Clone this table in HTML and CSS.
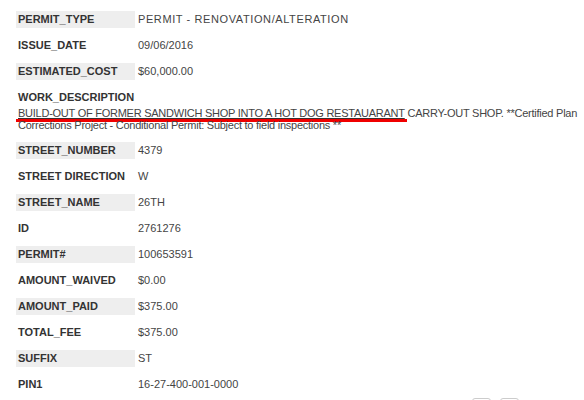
FILE: index.html
```html
<!DOCTYPE html>
<html>
<head>
<meta charset="utf-8">
<link rel="stylesheet" href="styles.css">
</head>
<body>
<div class="record">
  <div class="row alt"><div class="k">PERMIT_TYPE</div><div class="v wide">PERMIT - RENOVATION/ALTERATION</div></div>
  <div class="row"><div class="k">ISSUE_DATE</div><div class="v">09/06/2016</div></div>
  <div class="row alt"><div class="k">ESTIMATED_COST</div><div class="v">$60,000.00</div></div>
  <div class="desc-block">
    <div class="desc-label">WORK_DESCRIPTION</div>
    <div class="desc-text">
      <div class="line"><span class="mark"><span class="link">BUILD-OUT OF FORMER SANDWICH SHOP INTO A HOT DOG RESTAUARANT</span></span> CARRY-OUT SHOP. **Certified Plan</div>
      <div class="line">Corrections Project - Conditional Permit: Subject to field inspections **</div>
    </div>
  </div>
  <div class="row alt"><div class="k">STREET_NUMBER</div><div class="v">4379</div></div>
  <div class="row"><div class="k">STREET DIRECTION</div><div class="v">W</div></div>
  <div class="row alt"><div class="k">STREET_NAME</div><div class="v">26TH</div></div>
  <div class="row"><div class="k">ID</div><div class="v">2761276</div></div>
  <div class="row alt"><div class="k">PERMIT#</div><div class="v">100653591</div></div>
  <div class="row"><div class="k">AMOUNT_WAIVED</div><div class="v">$0.00</div></div>
  <div class="row alt"><div class="k">AMOUNT_PAID</div><div class="v">$375.00</div></div>
  <div class="row"><div class="k">TOTAL_FEE</div><div class="v">$375.00</div></div>
  <div class="row alt"><div class="k">SUFFIX</div><div class="v">ST</div></div>
  <div class="row last"><div class="k">PIN1</div><div class="v">16-27-400-001-0000</div></div>
  <div class="pager"><span class="btn"></span><span class="btn"></span></div>
</div>
</body>
</html>
```
FILE: styles.css
```css
html, body {
  margin: 0;
  padding: 0;
  background: #ffffff;
  overflow: hidden;
}
body {
  font-family: "Liberation Sans", Arial, sans-serif;
  font-size: 11px;
  color: #444444;
}
.record {
  padding: 11px 0 0 16px;
}
.row {
  display: flex;
  height: 17px;
  line-height: 17px;
  margin-bottom: 9px;
}
.row.last {
  margin-bottom: 0;
}
.k {
  width: 117px;
  padding-left: 2px;
  font-weight: bold;
  color: #333333;
  white-space: nowrap;
}
.row.alt .k {
  background: #eeeeee;
}
.v {
  padding-left: 3px;
  white-space: nowrap;
}
.v.wide {
  letter-spacing: 0.6px;
}
.desc-block {
  margin-bottom: 11px;
}
.desc-label {
  height: 17px;
  line-height: 17px;
  padding-left: 2px;
  font-weight: bold;
  color: #333333;
}
.desc-text {
  padding-left: 2px;
  line-height: 11.5px;
  margin-top: 2px;
}
.line {
  white-space: nowrap;
  letter-spacing: -0.25px;
}
.mark {
  border-bottom: 3px solid #f00000;
  margin: 0 -2px;
  padding: 0 2px;
}
.link {
  text-decoration: underline;
  text-decoration-color: #333333;
  color: #444444;
}
.pager {
  display: flex;
  justify-content: flex-end;
  gap: 9px;
  padding-right: 65px;
  margin-top: 5px;
}
.btn {
  width: 17px;
  height: 20px;
  border: 1px solid #cccccc;
  border-radius: 3px;
  background: #ffffff;
}
```
